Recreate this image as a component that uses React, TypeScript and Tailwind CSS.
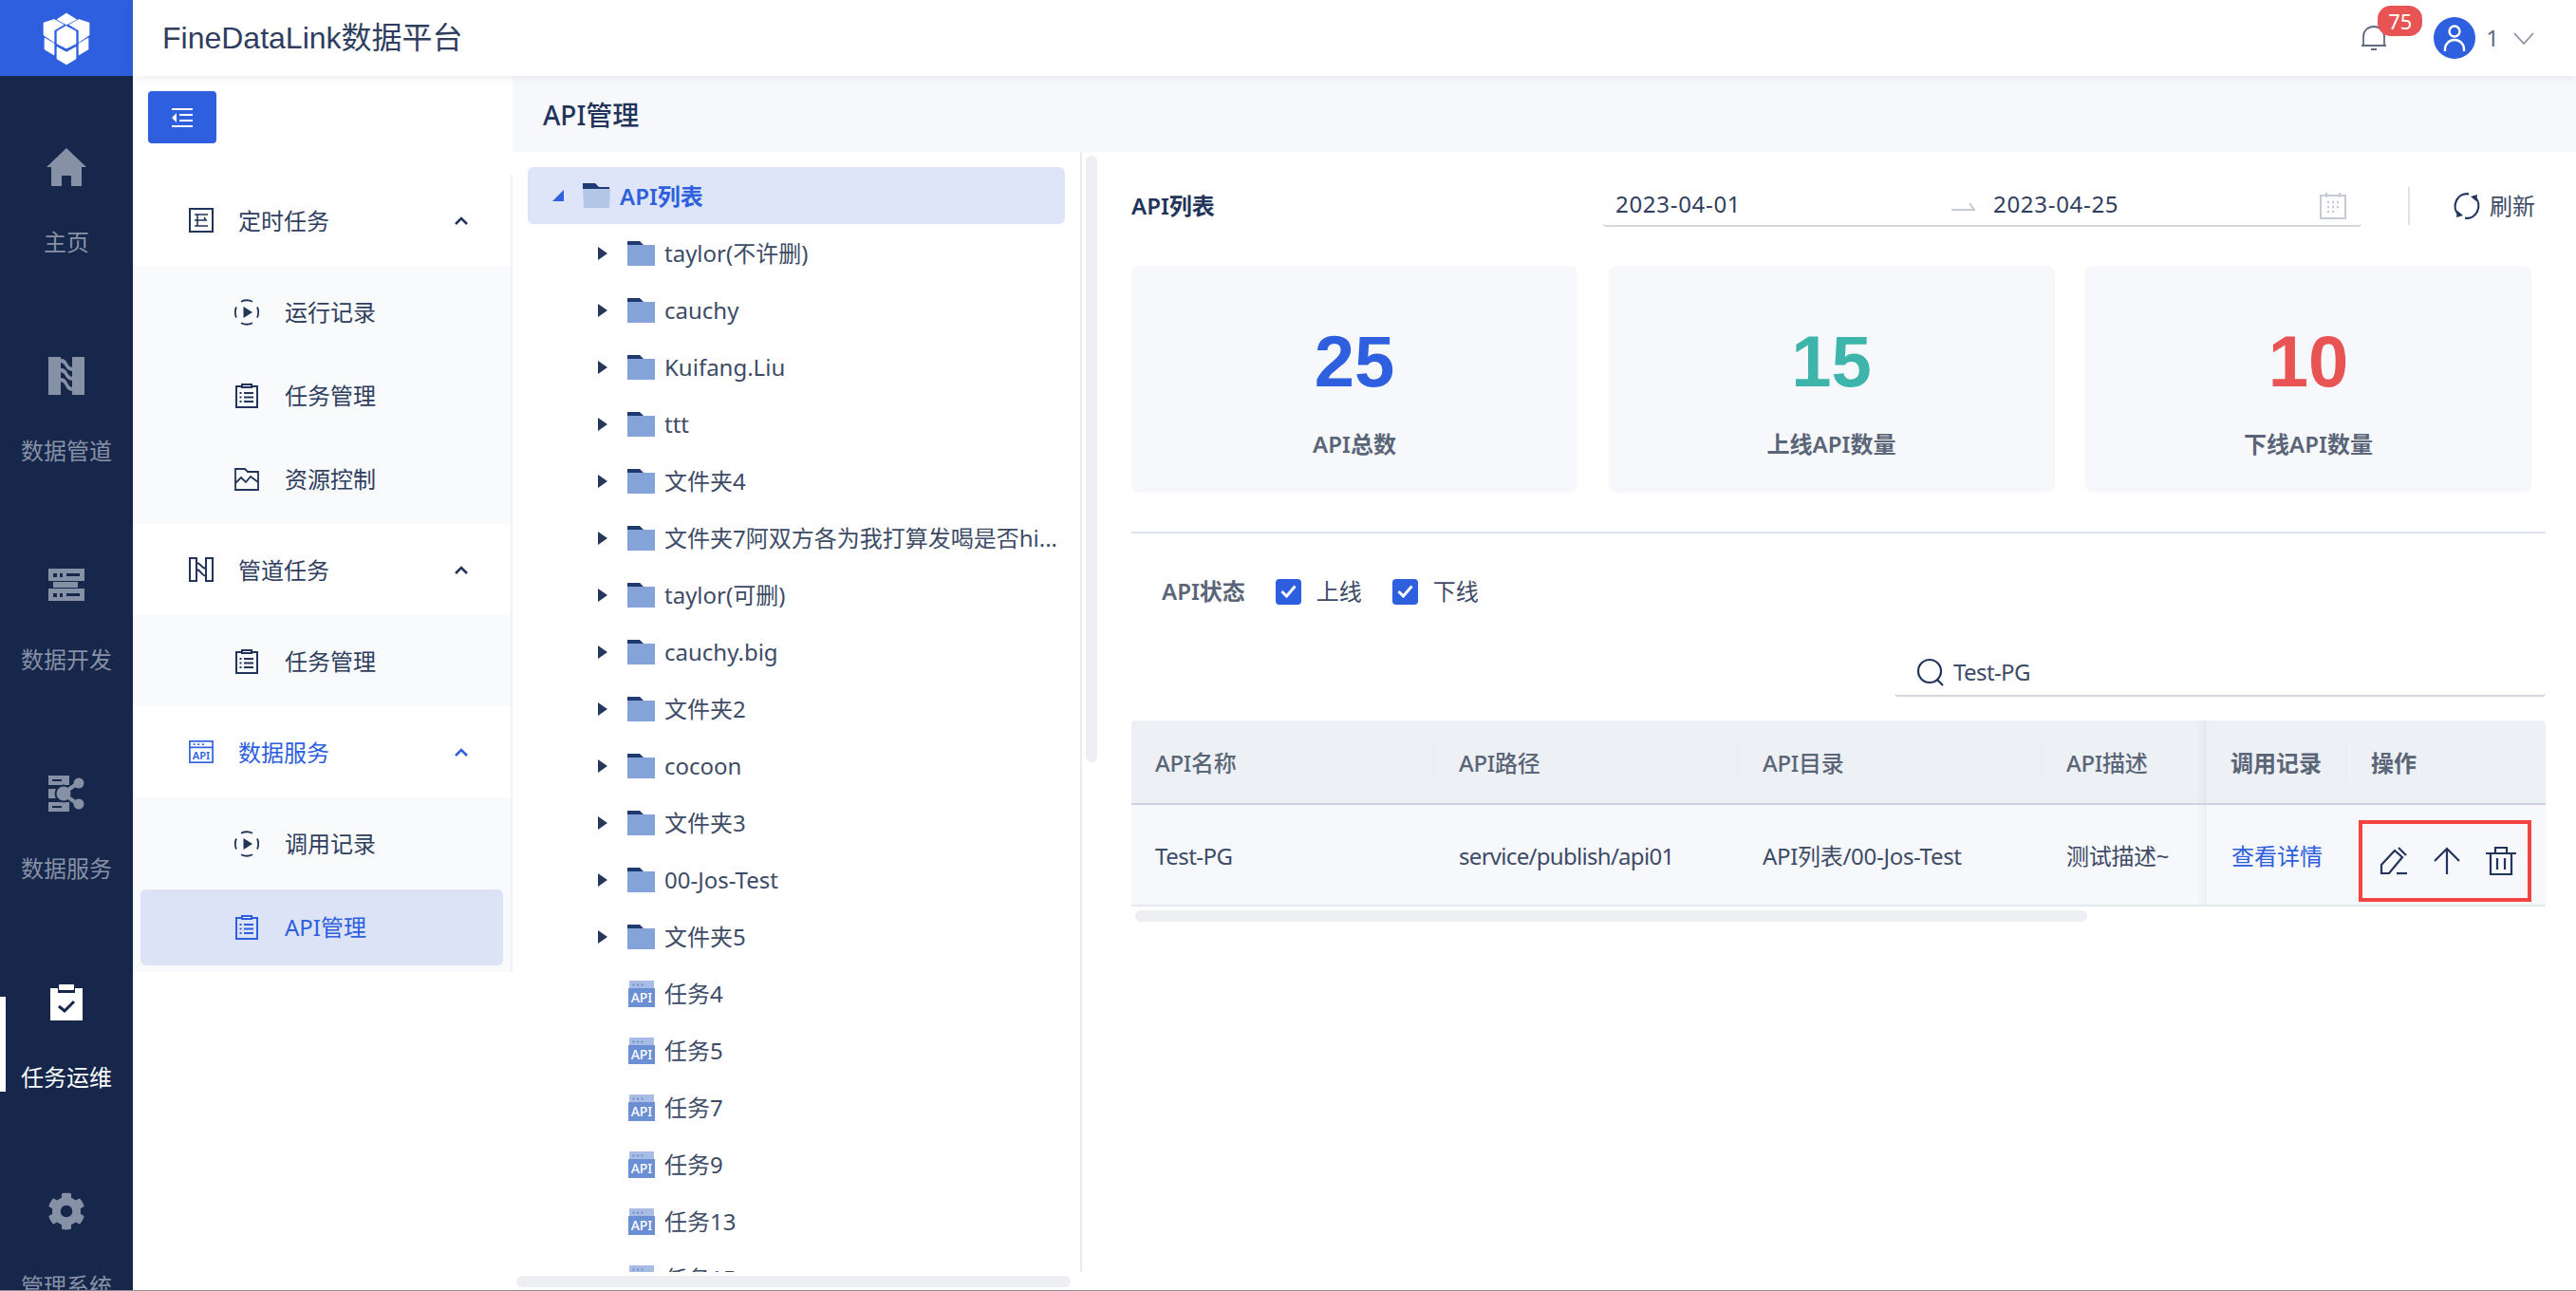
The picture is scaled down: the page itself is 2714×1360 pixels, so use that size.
import React from "react";
import { FaCog } from "react-icons/fa";

const FONT = "font-['Noto_Sans','Noto_Sans_CJK_SC',sans-serif]";

function Logo() {
  return (
    <svg width="80" height="80" viewBox="0 0 80 80" fill="#fff" stroke="#fff" strokeWidth="0.700" strokeLinejoin="round">
      <path d="M40 14L50.500 20.500L40 26L30 20.500Z" />
      <path d="M16 24L27 20.500L37 26L27 32V44.500L16 37Z" />
      <path d="M64 24L53 20.500L43 26L53 32V44.500L64 37Z" />
      <path d="M39.500 27.500L50 33V46L40 51L30 46V33Z" />
      <path d="M17 40L27 46V58L17 52Z" />
      <path d="M63 40L53 46V58L63 52Z" />
      <path d="M30 49.500L40 55L50 49.500V62L40 68L30 62Z" />
    </svg>
  );
}

function HomeI() {
  return (
    <svg width="42" height="40" viewBox="0 0 42 40" fill="#8791a5">
      <path d="M0 20L21 0L42 20H37V40H26V29H16V40H5V20Z" />
    </svg>
  );
}

function PipeI() {
  return (
    <svg width="38" height="40" viewBox="0 0 38 40" fill="#8791a5">
      <rect x="0" y="0" width="13" height="40" />
      <rect x="25" y="0" width="13" height="40" />
      <path d="M13 2C21 2 19 10 25 11V15C17 14 19 7 13 6Z" />
      <path d="M13 12C21 12 19 20 25 21V25C17 24 19 17 13 16Z" />
      <path d="M13 22C21 22 19 31 25 32V36C17 35 19 27 13 26Z" />
    </svg>
  );
}

function DevI() {
  return (
    <svg width="38" height="34" viewBox="0 0 38 34" fill="none">
      <path d="M0 0H38V13H0ZM0 21H38V34H0Z" fill="#8791a5" />
      <path d="M5 14H31V20H5Z" fill="#8791a5" />
      <path d="M5 5h4v4H5zM12 5h3v4h-3zM19 5h14v3H19zM5 26h4v4H5zM12 26h3v4h-3zM19 26h14v3H19z" fill="#16274b" />
    </svg>
  );
}

function ServiceI() {
  return (
    <svg width="38" height="38" viewBox="0 0 38 38">
      <path d="M0 0H22V10H0ZM0 14H10V24H0ZM0 28H22V38H0Z" fill="#8791a5" />
      <path d="M4 4h10v2H4zM4 32h10v2H4z" fill="#16274b" />
      <circle cx="16" cy="19" r="8.500" fill="#8791a5" stroke="#16274b" strokeWidth="2" />
      <circle cx="32" cy="8" r="5.500" fill="#8791a5" />
      <circle cx="32" cy="30" r="5.500" fill="#8791a5" />
      <path d="M18 17L31 8M18 21L31 30" stroke="#8791a5" strokeWidth="4" />
    </svg>
  );
}

function TaskI() {
  return (
    <svg width="34" height="38" viewBox="0 0 34 38">
      <path d="M0 4H8V9H26V4H34V38H0Z" fill="#fff" />
      <rect x="9" y="0" width="16" height="6" rx="1" fill="#fff" />
      <path d="M9 23L15 28L25 18" fill="none" stroke="#16274b" strokeWidth="3" />
    </svg>
  );
}

function Nav({ icon, label, active }: { icon: React.ReactNode; label: string; active?: boolean }) {
  return (
    <div className="relative h-[220px] shrink-0 flex flex-col items-center">
      {active && <div className="absolute left-0 top-[90px] h-[100px] w-[6px] bg-white" />}
      <div className="h-[40px] mt-[76px] flex items-center justify-center">{icon}</div>
      <div className={`mt-[43px] text-[24px] leading-[32px] ${active ? "text-white" : "text-[#8791a5]"}`}>{label}</div>
    </div>
  );
}

const C = "#22345a";

function TimerI({ c = C }: { c?: string }) {
  return (
    <svg width="26" height="26" viewBox="0 0 26 26" fill="none" stroke={c} strokeWidth="2">
      <rect x="1" y="1" width="24" height="24" />
      <path d="M6 7H20M6 13H18L16 10M6 19H20M9 7V19" strokeWidth="1.600" />
    </svg>
  );
}
function PipeOutI({ c = C }: { c?: string }) {
  return (
    <svg width="26" height="26" viewBox="0 0 26 26" fill="none" stroke={c} strokeWidth="2">
      <rect x="1" y="1" width="7" height="24" />
      <rect x="18" y="1" width="7" height="24" />
      <path d="M8 6C13 6 12 11 18 12M8 13C13 13 12 19 18 20" />
    </svg>
  );
}
function ApiBoxI({ c = "#2d5fde" }: { c?: string }) {
  return (
    <svg width="28" height="26" viewBox="0 0 28 26" fill="none">
      <rect x="1" y="1" width="26" height="24" stroke={c} strokeWidth="1.800" />
      <path d="M1 8H27" stroke={c} strokeWidth="1.800" />
      <path d="M5 4.500h2M10 4.500h2M15 4.500h2" stroke={c} strokeWidth="1.800" />
      <text x="14" y="21.500" textAnchor="middle" fontSize="12" fontWeight="600" fontFamily="Noto Sans" fill={c}>API</text>
    </svg>
  );
}
function PlayI() {
  return (
    <svg width="28" height="28" viewBox="0 0 28 28" fill="none" stroke={C} strokeWidth="1.800">
      <path d="M3 8.500A13 13 0 001.800 14 13 13 0 003 19.500M25 8.500A13 13 0 0126.200 14 13 13 0 0125 19.500M8 2.800A13 13 0 0120 2.800M8 25.200A13 13 0 0020 25.200" />
      <path d="M10.500 8L20 14L10.500 20Z" fill={C} stroke="none" />
    </svg>
  );
}
function ClipI({ c = C }: { c?: string }) {
  return (
    <svg width="24" height="26" viewBox="0 0 24 26" fill="none" stroke={c} strokeWidth="2">
      <rect x="1" y="3" width="22" height="22" />
      <rect x="7" y="1" width="10" height="3" fill="#fff" />
      <path d="M9 10H19M9 14.500H19M9 19H19M4.500 10H6.500M4.500 14.500H6.500M4.500 19H6.500" strokeWidth="1.800" />
    </svg>
  );
}
function ResI() {
  return (
    <svg width="26" height="24" viewBox="0 0 26 24" fill="none" stroke={C} strokeWidth="1.800">
      <path d="M1 1H11L14 4H25V23H1Z" />
      <path d="M1 16L7 10L12 15L17 9L25 15" />
    </svg>
  );
}

function Head({ icon, label, blue }: { icon: React.ReactNode; label: string; blue?: boolean }) {
  return (
    <div className="h-[96px] flex items-center pl-[59px]">
      <div className="w-[26px] flex justify-center">{icon}</div>
      <span className={`ml-[26px] w-[228px] pt-[2px] text-[24px] ${blue ? "text-[#2d5fde]" : "text-[#2f3e5e]"}`}>{label}</span>
      <svg width="14" height="9" viewBox="0 0 14 9" fill="none" stroke={blue ? "#2d5fde" : C} strokeWidth="2.600">
        <path d="M1 8L7 2L13 8" />
      </svg>
    </div>
  );
}

function Sub({ icon, label, active }: { icon: React.ReactNode; label: string; active?: boolean }) {
  return (
    <div className={`mx-2 h-[80px] flex items-center pl-[97px] rounded-md ${active ? "bg-[#dce3f6]" : ""}`}>
      <div className="w-[30px] flex justify-center">{icon}</div>
      <span className={`ml-[25px] text-[24px] ${active ? "text-[#2d5fde]" : "text-[#2f3e5e]"}`}>{label}</span>
    </div>
  );
}

function Folder({ open }: { open?: boolean }) {
  return (
    <svg width="29" height="26" viewBox="0 0 29 26" className="shrink-0">
      <path d={open ? "M0 6H29L28 26H1Z" : "M0 4H29V26H0Z"} fill={open ? "#b3c6e8" : "#84a3d9"} />
      {!open && <path d="M0 0H13L17 4H0Z" fill="#1f3a6e" />}
      {open && <path d="M0 0H13L17 4H28V6H0Z" fill="#1f3a6e" />}
    </svg>
  );
}

function ApiLeaf() {
  return (
    <svg width="28" height="28" viewBox="0 0 28 28" className="shrink-0">
      <rect x="1" y="0" width="26" height="10" fill="#a9bde4" />
      <path d="M4.500 4.500h2M9 4.500h2M13.500 4.500h2" stroke="#6a8fd4" strokeWidth="1.800" />
      <rect x="0" y="8" width="28" height="20" fill="#6a8fd4" />
      <text x="14" y="23" textAnchor="middle" fontSize="14" fontFamily="Noto Sans" fontWeight="500" fill="#fff">API</text>
    </svg>
  );
}

const folders = [
  "taylor(不许删)", "cauchy", "Kuifang.Liu", "ttt", "文件夹4", "文件夹7阿双方各为我打算发喝是否hi...",
  "taylor(可删)", "cauchy.big", "文件夹2", "cocoon", "文件夹3", "00-Jos-Test", "文件夹5",
];
const leaves = ["任务4", "任务5", "任务7", "任务9", "任务13", "任务15"];

function Tree() {
  return (
    <div className="relative w-[620px] shrink-0 h-[1200px]">
      <div className="w-[600px] h-[1180px] border-r-2 border-[#e8ebf0] overflow-hidden pt-4">
        <div className="ml-4 w-[566px] h-[60px] rounded-md bg-[#dfe5f8] flex items-center pl-[26px]">
          <svg width="12" height="12" viewBox="0 0 12 12" fill="#2d5fde"><path d="M12 0V12H0Z" /></svg>
          <div className="ml-[20px]"><Folder open /></div>
          <span className="ml-[10px] pt-[2px] text-[24px] font-semibold text-[#2d5fde]">API列表</span>
        </div>
        <div className="mt-px">
          {folders.map((f) => (
            <div key={f} className="h-[60px] flex items-center pl-[90px]">
              <svg width="10" height="14" viewBox="0 0 10 14" fill="#26375c" className="shrink-0"><path d="M0 0L10 7L0 14Z" /></svg>
              <div className="ml-[21px]"><Folder /></div>
              <span className="ml-[10px] text-[24px] text-[#3d4b66] whitespace-nowrap">{f}</span>
            </div>
          ))}
          {leaves.map((f) => (
            <div key={f} className="h-[60px] flex items-center pl-[122px]">
              <ApiLeaf />
              <span className="ml-[10px] text-[24px] text-[#3d4b66]">{f}</span>
            </div>
          ))}
        </div>
      </div>
      <div className="absolute left-[604px] top-[4px] w-[12px] h-[639px] rounded-md bg-[#eeeff3]" />
      <div className="absolute left-[4px] top-[1184px] w-[584px] h-[12px] rounded-full bg-[#eeeff3]" />
    </div>
  );
}

function Stat({ n, label, color }: { n: string; label: string; color: string }) {
  return (
    <div className="h-[239px] rounded-lg bg-[#f7f8fc] flex flex-col items-center pt-[63px]">
      <div className={`font-['Liberation_Sans',sans-serif] font-bold text-[76px] leading-[76px] ${color}`}>{n}</div>
      <div className="mt-[33px] text-[24px] leading-[32px] font-semibold text-[#5a6577]">{label}</div>
    </div>
  );
}

function Check({ label }: { label: string }) {
  return (
    <div className="flex items-center">
      <div className="w-[27px] h-[27px] rounded bg-[#2d5fde] flex items-center justify-center">
        <svg width="17" height="14" viewBox="0 0 17 14" fill="none" stroke="#fff" strokeWidth="3"><path d="M1.500 7L6.500 12L15.500 1.500" /></svg>
      </div>
      <span className="ml-[16px] text-[24px] leading-[32px] text-[#3d4b66]">{label}</span>
    </div>
  );
}

function HCell({ label, sep, strong }: { label: string; sep?: boolean; strong?: boolean }) {
  return (
    <div className="relative flex items-center pl-[25px] pt-[2px]">
      <span className={`text-[24px] whitespace-nowrap text-[#5a6577] ${strong ? "font-semibold" : "font-medium tracking-[-0.3px]"}`}>{label}</span>
      {sep && <div className="absolute right-0 top-[24px] w-[2px] h-[39px] bg-[#eaedf2]" />}
    </div>
  );
}

function EdgeShade() {
  return <div className="absolute right-0 top-0 bottom-0 w-[12px] bg-gradient-to-l from-[rgba(0,0,0,0.035)] to-transparent" />;
}

function Right() {
  return (
    <div className="flex-1 min-w-0 pl-[32px] pr-[32px]">
      <div className="mt-[37px] h-[40px] flex items-center">
        <div className="w-[497px] shrink-0 text-[24px] font-semibold text-[#22345a]">API列表</div>
        <div className="w-[799px] h-[42px] mt-[2px] shrink-0 border-b-2 border-[#d3d6de] rounded-b flex items-center pl-[13px] pr-[16px] text-[24px] text-[#2f3e5e]">
          <span className="w-[353px] tracking-[0.7px] mt-[-4px]">2023-04-01</span>
          <svg width="26" height="10" viewBox="0 0 26 10" fill="none" stroke="#c5cad6" strokeWidth="2"><path d="M1 9H25L20 2" /></svg>
          <span className="ml-[19px] flex-1 tracking-[0.7px] mt-[-4px]">2023-04-25</span>
          <svg width="28" height="28" viewBox="0 0 28 28" fill="none" stroke="#c5cad6" strokeWidth="2">
            <rect x="1" y="3" width="26" height="24" />
            <path d="M7 0V5M21 0V5" />
            <path d="M8 10h2M13 10h2M18 10h2M8 15h2M13 15h2M18 15h2M8 20h2M13 20h2" strokeWidth="2.500" />
          </svg>
        </div>
        <div className="ml-[49px] w-[2px] h-[40px] shrink-0 bg-[#dfe2ea]" />
        <svg width="28" height="30" viewBox="0 0 28 30" fill="none" stroke="#22345a" strokeWidth="2.200" className="ml-[46px] shrink-0">
          <path d="M16 2.300A12.500 13 0 005 24" />
          <path d="M12 27.700A12.500 13 0 0023 6" />
          <path d="M10 25L3 27L4 20Z M18 5L25 3L24 10Z" fill="#22345a" stroke="none" />
        </svg>
        <span className="ml-[10px] text-[24px] whitespace-nowrap text-[#3d4b66]">刷新</span>
      </div>

      <div className="mt-[43px] w-[1475px] grid grid-cols-3 gap-[32.5px]">
        <Stat n="25" label="API总数" color="text-[#2d5fde]" />
        <Stat n="15" label="上线API数量" color="text-[#3db5aa]" />
        <Stat n="10" label="下线API数量" color="text-[#e85454]" />
      </div>

      <div className="mt-[41px] h-[2px] bg-[#dfe2ea]" />

      <div className="mt-[45px] pl-[32px] flex items-center">
        <span className="text-[24px] leading-[32px] font-semibold text-[#5a6577]">API状态</span>
        <div className="ml-[32px]"><Check label="上线" /></div>
        <div className="ml-[32px]"><Check label="下线" /></div>
      </div>

      <div className="mt-[49px] ml-auto w-[686px] h-[46px] border-b-2 border-[#d3d6de] rounded-b flex items-center pl-[23px] pb-[5px]">
        <svg width="30" height="30" viewBox="0 0 30 30" fill="none" stroke="#22345a" strokeWidth="2.200">
          <circle cx="14" cy="14" r="12" />
          <path d="M22 23L28 29" />
        </svg>
        <span className="ml-[9px] text-[24px] tracking-[-0.6px] text-[#3d4b66]">Test-PG</span>
      </div>

      <div className="mt-[25px] grid grid-cols-[320px_320px_320px_173px_148px_209px]">
        <div className="col-span-6 grid grid-cols-subgrid h-[89px] bg-[#edf0f5] border-b-2 border-[#cdd2dc] rounded-t">
          <HCell label="API名称" sep />
          <HCell label="API路径" sep />
          <HCell label="API目录" sep />
          <div className="relative flex items-center pl-[25px] pt-[2px]">
            <span className="text-[24px] whitespace-nowrap font-medium tracking-[-0.3px] text-[#5a6577]">API描述</span>
            <EdgeShade />
          </div>
          <HCell label="调用记录" sep strong />
          <HCell label="操作" strong />
        </div>
        <div className="col-span-6 grid grid-cols-subgrid h-[107px] bg-[#f7f8fc] border-b-2 border-[#e4e7ed] text-[24px] text-[#3d4b66]">
          <div className="flex items-center pl-[25px] pt-[2px] tracking-[-0.5px]">Test-PG</div>
          <div className="flex items-center pl-[25px] pt-[2px] tracking-[-0.7px]">service/publish/api01</div>
          <div className="flex items-center pl-[25px] pt-[2px] tracking-[-0.3px]">API列表/00-Jos-Test</div>
          <div className="relative flex items-center pl-[25px] pt-[2px] whitespace-nowrap tracking-[-0.3px]">
            测试描述~
            <EdgeShade />
          </div>
          <div className="flex items-center pl-[26px] pt-[2px] text-[#2d5fde] whitespace-nowrap">查看详情</div>
          <div className="relative">
            <div className="absolute left-[12px] top-[16px] w-[182px] h-[86px] border-[4px] border-[#f44343] flex items-center pl-[18px] gap-[26px]">
              <svg width="30" height="30" viewBox="0 0 30 30" fill="none" stroke="#22345a" strokeWidth="2.200">
                <path d="M2 19L16 4L24 11L10 28H2Z" />
                <path d="M20 1L28 9" />
                <path d="M18 28H29" />
              </svg>
              <svg width="30" height="30" viewBox="0 0 30 30" fill="none" stroke="#22345a" strokeWidth="2.200">
                <path d="M15 29V2M2 15L15 2L28 15" />
              </svg>
              <svg width="32" height="30" viewBox="0 0 32 30" fill="none" stroke="#22345a" strokeWidth="2.200">
                <path d="M0 7H32M10 7V1H22V7M5 7V29H27V7M12 12V24M20 12V24" />
              </svg>
            </div>
          </div>
        </div>
      </div>
      <div className="mt-[4px] ml-[4px] w-[1003px] h-[12px] rounded-full bg-[#eeeff3]" />
    </div>
  );
}

export default function App() {
  return (
    <div className={`w-[2714px] h-[1360px] flex overflow-hidden bg-white border-b border-[#8a8f99] ${FONT}`}>
      <aside className="w-[140px] shrink-0 h-full bg-[#16274b] flex flex-col overflow-hidden">
        <div className="h-[80px] shrink-0 bg-[#2d5fde] flex justify-center"><Logo /></div>
        <Nav icon={<HomeI />} label="主页" />
        <Nav icon={<PipeI />} label="数据管道" />
        <Nav icon={<DevI />} label="数据开发" />
        <Nav icon={<ServiceI />} label="数据服务" />
        <Nav icon={<TaskI />} label="任务运维" active />
        <Nav icon={<FaCog size={40} color="#8791a5" />} label="管理系统" />
      </aside>
      <div className="flex-1 min-w-0 flex flex-col">
        <header className="relative z-10 h-[80px] shrink-0 bg-white shadow-[0_2px_10px_rgba(0,0,0,0.07)] flex items-center pl-[31px]">
          <div className="font-['Liberation_Sans','Noto_Sans_CJK_SC',sans-serif] text-[32px] text-[#2f3e5e]">FineDataLink数据平台</div>
          <div className="ml-auto flex items-center mr-[44px]">
            <div className="relative w-[26px] h-[26px] mt-[-1px]">
              <svg width="26" height="26" viewBox="0 0 26 26" fill="none" stroke="#5f6b80" strokeWidth="1.800">
                <path d="M2 20V11A11 10 0 0124 11V20M0 21H26" />
                <path d="M10 25H16" strokeWidth="2" />
              </svg>
              <div className="absolute left-[17px] top-[-21px] w-[47px] h-[32px] rounded-[14px] bg-[#e85454] text-white text-[22px] leading-[32px] text-center">75</div>
            </div>
            <div className="ml-[50px] w-[44px] h-[44px] rounded-full bg-[#2d5fde] flex items-center justify-center">
              <svg width="26" height="30" viewBox="0 0 26 30" fill="none" stroke="#fff" strokeWidth="2.400">
                <circle cx="13" cy="8" r="5.500" />
                <path d="M3 29V27A10 10 0 0123 27V29" />
              </svg>
            </div>
            <span className="ml-[11px] text-[24px] text-[#5f6b80]">1</span>
            <svg width="22" height="13" viewBox="0 0 22 13" fill="none" stroke="#8b93a3" strokeWidth="1.800" className="ml-[15px]">
              <path d="M1 1L11 12L21 1" />
            </svg>
          </div>
        </header>
        <div className="flex-1 min-h-0 flex">
          <div className="w-[400px] shrink-0">
            <div className="h-[104px] pl-4 pt-4">
              <div className="w-[72px] h-[55px] rounded bg-[#2d5fde] flex items-center justify-center">
                <svg width="22" height="20" viewBox="0 0 22 20" fill="#fff">
                  <path d="M0 0H22V2H0ZM8 6H22V8H8ZM8 12H22V14H8ZM0 18H22V20H0ZM5 5V15L0 10Z" />
                </svg>
              </div>
            </div>
            <div className="h-[840px] border-r-2 border-[#f0f2f6]">
              <Head icon={<TimerI />} label="定时任务" />
              <div className="h-[272px] bg-[#f9fafb] pt-[9px] flex flex-col gap-2">
                <Sub icon={<PlayI />} label="运行记录" />
                <Sub icon={<ClipI />} label="任务管理" />
                <Sub icon={<ResI />} label="资源控制" />
              </div>
              <Head icon={<PipeOutI />} label="管道任务" />
              <div className="h-[96px] bg-[#f9fafb] pt-[9px]">
                <Sub icon={<ClipI />} label="任务管理" />
              </div>
              <Head icon={<ApiBoxI />} label="数据服务" blue />
              <div className="h-[184px] bg-[#f9fafb] pt-[9px] flex flex-col gap-2">
                <Sub icon={<PlayI />} label="调用记录" />
                <Sub icon={<ClipI c="#2d5fde" />} label="API管理" active />
              </div>
            </div>
          </div>
          <div className="flex-1 min-w-0 flex flex-col">
            <div className="h-[80px] shrink-0 bg-[#f7f8fc] flex items-center pl-8 pt-[2px] text-[28px] font-medium text-[#22345a]">API管理</div>
            <div className="flex-1 min-h-0 flex">
              <Tree />
              <Right />
            </div>
          </div>
        </div>
      </div>
    </div>
  );
}
